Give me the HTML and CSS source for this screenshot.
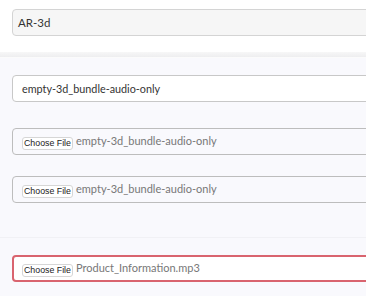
FILE: index.html
```html
<!DOCTYPE html>
<html lang="en">
<head>
    <meta charset="UTF-8">
    <meta name="viewport" content="width=device-width, initial-scale=1.0">
    <title>Bundle upload</title>
    <link rel="stylesheet" href="styles.css">
</head>
<body>
    <div class="page">
        <section class="top-section">
            <div class="field field-readonly">AR-3d</div>
        </section>
        <div class="shade"></div>

        <section class="form-panel">
            <div class="field field-text">empty-3d_bundle-audio-only</div>

            <div class="field field-file file-one">
                <span class="file-button">Choose File</span>
                <span class="file-name">empty-3d_bundle-audio-only</span>
            </div>

            <div class="field field-file file-two">
                <span class="file-button">Choose File</span>
                <span class="file-name">empty-3d_bundle-audio-only</span>
            </div>

            <div class="divider"></div>

            <div class="field field-file field-error">
                <span class="file-button">Choose File</span>
                <span class="file-name">Product_Information.mp3</span>
            </div>
        </section>
    </div>
</body>
</html>
```

FILE: styles.css
```css
* {
    margin: 0;
    padding: 0;
    box-sizing: border-box;
}
body {
    font-family: Lato, "Open Sans", sans-serif;
    background-color: #f9f9fd;
}
.page {
    height: 296px;
    overflow: hidden;
}
.top-section {
    background-color: #fff;
    padding: 9px 0 0 12px;
    height: 52px;
}
.shade {
    height: 6px;
    background: linear-gradient(#f7f7f7, #eeeef0);
    border-bottom: 1px solid #fbfbfb;
}
.form-panel {
    background-color: #f9f9fd;
    padding: 17px 0 0 12px;
}
.field {
    margin-right: -20px;
    height: 27px;
    border: 1px solid #c8c8c8;
    border-radius: 4px;
    display: flex;
    align-items: center;
    padding-left: 9px;
    font-size: 10.8px;
    color: #333;
}
.field-readonly {
    background-color: #f6f6f6;
    border-color: #d4d4d4;
    padding-left: 5px;
    font-size: 11.5px;
}
.field-text {
    background-color: #fff;
}
.field-file {
    background-color: #f9f9fd;
    border-color: #bdbdbd;
}
.file-one {
    margin-top: 26px;
}
.file-two {
    margin-top: 21px;
}
.file-button {
    font-family: "Liberation Sans", Arial, sans-serif;
    font-size: 8.8px;
    color: #222;
    background-color: #fff;
    border: 1px solid #d6d6d6;
    border-radius: 3px;
    height: 13px;
    width: 51px;
    display: flex;
    align-items: center;
    justify-content: center;
    margin-top: 3px;
}
.file-name {
    font-size: 11px;
    color: #777;
    margin-left: 3px;
    margin-top: -3px;
}
.divider {
    height: 1px;
    background-color: #f1f1f5;
    margin: 34px -12px 17px -12px;
}
.field-error {
    background-color: #fff;
    border: 2px solid #d9646f;
    padding-left: 8px;
}
```
